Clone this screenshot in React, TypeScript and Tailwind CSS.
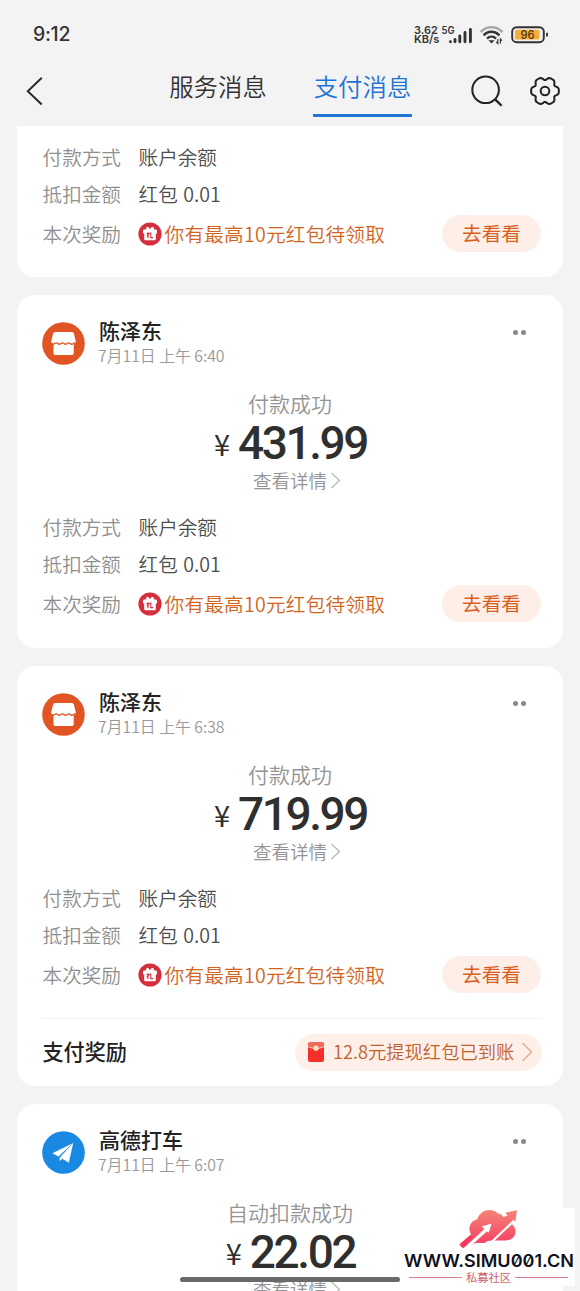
import type { ReactNode } from 'react'

interface Payment {
  name: string
  time: string
  status: string
  amount: string
  icon: 'shop' | 'plane'
  cashback?: string
}

const payments: Payment[] = [
  { name: '陈泽东', time: '7月11日 上午 6:40', status: '付款成功', amount: '431.99', icon: 'shop' },
  {
    name: '陈泽东',
    time: '7月11日 上午 6:38',
    status: '付款成功',
    amount: '719.99',
    icon: 'shop',
    cashback: '12.8元提现红包已到账',
  },
  { name: '高德打车', time: '7月11日 上午 6:07', status: '自动扣款成功', amount: '22.02', icon: 'plane' },
]

// Six-lobed outline for the settings icon
const gearPath = () => {
  const points: string[] = []
  for (let deg = 0; deg < 360; deg += 4) {
    const t = (deg * Math.PI) / 180
    const r = 12.8 + 1.5 * Math.cos(6 * t) - 0.45 * Math.cos(12 * t)
    points.push(`${(16 + r * Math.cos(t)).toFixed(2)} ${(16 + r * Math.sin(t)).toFixed(2)}`)
  }
  return `M${points.join('L')}Z`
}

const StatusBar = () => (
  <div className="flex h-[70px] items-center justify-between pl-[33px] pr-[32px] font-['Inter','Noto_Sans_CJK_SC',sans-serif] text-[#333]">
    <span className="text-[19.5px] font-medium tracking-[-0.3px]">9:12</span>
    <div className="flex items-center">
      <div className="w-[26px] text-[11px] font-semibold leading-[9.5px]">
        <div>3.62</div>
        <div>KB/s</div>
      </div>
      <svg width="33" height="20" viewBox="0 0 33 20" className="text-[#333]">
        <text x="1.5" y="9" fontSize="10" fontWeight="600" fill="currentColor" textLength="13" lengthAdjust="spacingAndGlyphs">
          5G
        </text>
        <g stroke="currentColor" strokeWidth="2.9" strokeLinecap="round">
          <path d="M10.4 16.6v.2M15 14.4v2.4M19.8 11v5.8M25 7.4v9.4M30.4 4.4v12.4" />
        </g>
      </svg>
      <svg width="25" height="20" viewBox="0 0 25 20" fill="none" className="ml-[6px]">
        <path d="M1.6 7C7.5 .6 17.5 .6 23.4 7" stroke="#aaa" strokeWidth="2.6" />
        <path d="M4.6 10.4c4.4-4.8 11.4-4.8 15.8 0" stroke="#333" strokeWidth="2.6" />
        <path d="M8 13.6c2.6-2.6 6.4-2.6 9 0" stroke="#333" strokeWidth="2.4" />
        <path d="M9.4 15.2h6.2L12.5 18.4z" fill="#333" />
        <path d="M18.8 14v4.5l-1.6-1.6M21.4 18.5V14l1.6 1.6" stroke="#333" strokeWidth="1.2" />
      </svg>
      <svg width="37" height="18" viewBox="0 0 37 18" className="ml-[7px]">
        <rect x="1.2" y="1.2" width="31.6" height="15" rx="4.5" fill="none" stroke="#333" strokeWidth="1.9" />
        <rect x="3.9" y="3.8" width="24.6" height="9.8" rx="1.5" fill="#f7ac3e" />
        <path d="M36 6.8v3.8" stroke="#333" strokeWidth="1.8" />
        <text x="9.5" y="13" fontSize="12" fontWeight="500" fill="#4b3513" textLength="14" lengthAdjust="spacingAndGlyphs">
          96
        </text>
      </svg>
    </div>
  </div>
)

const NavBar = () => (
  <div className="flex h-14 items-start pl-[26px]">
    <svg width="18" height="30" viewBox="0 0 18 30" fill="none" className="mt-[6px]">
      <path d="M15.8 1.8L1.8 15.2l14 13.2" stroke="#2a2a2a" strokeWidth="2" />
    </svg>
    <div className="ml-[125px] w-[98px] whitespace-nowrap text-center text-[24.4px] font-[350] leading-[31px] text-[#333]">
      服务消息
    </div>
    <div className="ml-[46px] h-[47px] w-[99px] whitespace-nowrap rounded-b-[1px] border-b-[3px] border-[#1f74d6] text-center text-[24.4px] font-[350] leading-[31px] text-[#1f74d6]">
      支付消息
    </div>
    <svg width="32" height="32" viewBox="0 0 32 32" fill="none" stroke="#222" strokeWidth="2" className="ml-[59px] mt-[5px]">
      <circle cx="14.6" cy="14.8" r="13.3" />
      <path d="M24.4 24.6l6.2 6.2" strokeWidth="2.3" />
    </svg>
    <svg width="32" height="32" viewBox="0 0 32 32" fill="none" stroke="#222" strokeWidth="2" className="ml-[26px] mt-[5px]">
      <path d={gearPath()} strokeLinejoin="round" />
      <circle cx="16" cy="16" r="4.3" />
    </svg>
  </div>
)

const GiftIcon = () => (
  <svg width="24" height="24" viewBox="0 0 24 24" className="shrink-0">
    <circle cx="12" cy="12" r="11.6" fill="#d32f3d" />
    <path d="M12 8.4L8.200 7.600 8.800 5.400 10.600 5.600zM12 8.400l3.800-.8-.6-2.200-1.800.2z" fill="#fff" stroke="#fff" strokeWidth=".8" strokeLinejoin="round" />
    <rect x="5" y="7.600" width="14" height="4" rx="1.200" fill="#fff" />
    <rect x="6.2" y="9" width="11.6" height="9.2" rx="1.2" fill="#fff" />
    <path d="M10 10.200v6M8.600 11.600h2.600l-2.400 2.600M12.800 10.200v5.400h2.400" fill="none" stroke="#d32f3d" strokeWidth="1.1" />
  </svg>
)

const ShopAvatar = () => (
  <svg width="43" height="43" viewBox="0 0 43 43" className="shrink-0">
    <circle cx="21.5" cy="21.5" r="21.3" fill="#e15524" />
    <path
      d="M13.400 10h16.200c1.300 0 2.100.7 2.400 1.900l1.700 7.100c.4 1.700-.4 2.900-2 3.200v8.700c0 1.300-.8 2.100-2.100 2.100H13.600c-1.300 0-2.100-.8-2.100-2.100v-8.700c-1.600-.3-2.600-1.500-2.200-3.200L11 11.900c.3-1.200 1.100-1.900 2.400-1.900z"
      fill="#fff"
    />
    <path
      d="M9.500 21.200q1.600 1.800 3.200.4t3.100 0 3.100 0 3.100 0 3.100 0 3.100 0 3.100 0 2.200-.4"
      fill="none"
      stroke="#e15524"
      strokeWidth="1.300"
    />
  </svg>
)

const PlaneAvatar = () => (
  <svg width="43" height="43" viewBox="0 0 43 43" className="shrink-0">
    <circle cx="21.500" cy="21.500" r="21.300" fill="#1989e3" />
    <path d="M31.200 12L10.400 22.200l6 3.400z" fill="#fff" />
    <path d="M31.200 12L18 26.200l8.800 5.600z" fill="#fff" />
    <path d="M17.200 26.400l.8 3.600 2.600-2.400z" fill="#fff" />
  </svg>
)

const RedPacket = () => (
  <svg width="16" height="20" viewBox="0 0 16 20" className="shrink-0">
    <rect width="16" height="20" rx="2.500" fill="#f5302b" />
    <path d="M0 5V2.500A2.500 2.500 0 0 1 2.500 0h11A2.500 2.500 0 0 1 16 2.500V5L8 7.500z" fill="#ee6a5a" />
    <path d="M0 4.800l8 2.400 8-2.400" fill="none" stroke="#fbc9b4" strokeWidth=".9" />
    <circle cx="8" cy="6.200" r="2.600" fill="#fde0c4" />
  </svg>
)

const InfoRow = ({ label, children }: { label: string; children: ReactNode }) => (
  <div className="flex h-[37px] items-center">
    <span className="w-24 text-[#8f8f8f]">{label}</span>
    <span className="text-[#4d4d4d] [word-spacing:1px]">{children}</span>
  </div>
)

const PaymentDetails = () => (
  <div className="whitespace-nowrap pl-[0.6px] text-[19.6px] font-[350] leading-[28px]">
    <InfoRow label="付款方式">账户余额</InfoRow>
    <InfoRow label="抵扣金额">红包 0.01</InfoRow>
    <div className="flex h-[43px] items-center">
      <span className="w-[95px] text-[#8f8f8f]">本次奖励</span>
      <GiftIcon />
      <span className="ml-[3px] tracking-[0.25px] text-[#d2641e]">你有最高10元红包待领取</span>
      <button className="ml-auto h-[37px] w-[99px] rounded-full bg-[#feeee8] pb-[2px] font-normal text-[#d95f1e]">去看看</button>
    </div>
  </div>
)

const PaymentCard = ({ payment }: { payment: Payment }) => (
  <div className="rounded-[18px] bg-white pl-[25px] pr-[22px] pt-[23px]">
    <div className="flex h-[50px] items-start">
      <div className="pt-1">{payment.icon === 'shop' ? <ShopAvatar /> : <PlaneAvatar />}</div>
      <div className="ml-[13px] whitespace-nowrap">
        <div className="h-[25px] pl-px text-[21px] font-medium leading-[24px] text-[#222]">{payment.name}</div>
        <div className="text-[15.8px] font-[350] leading-[26px] text-[#999]">{payment.time}</div>
      </div>
      <div className="ml-auto mr-[15px] mt-3 flex gap-[3px]">
        <span className="size-[5px] rounded-full bg-[#888]" />
        <span className="size-[5px] rounded-full bg-[#888]" />
      </div>
    </div>

    <div className="mr-[3px] mt-5 flex flex-col items-center whitespace-nowrap font-[350] text-[#949494]">
      <div className="h-[30px] text-[21px] leading-[30px]">{payment.status}</div>
      <div className="flex h-[50px] items-center gap-[7px] text-[#2f2f2f]">
        <span className="w-[18px] text-center text-[29px] font-normal leading-[50px]">¥</span>
        <span className="pt-px font-['Roboto'] text-[46px] font-medium leading-[49px] tracking-[-2.4px]">{payment.amount}</span>
      </div>
      <div className="flex h-6 items-center gap-[3px] pl-[14px] text-[18.500px] leading-[24px]">
        查看详情
        <svg width="11" height="17" viewBox="0 0 11 17" fill="none">
          <path d="M1.500 1l8 7.500-8 7.500" stroke="#bbb" strokeWidth="1.400" />
        </svg>
      </div>
    </div>

    <div className="mt-4 pb-[23px]">
      <PaymentDetails />
    </div>

    {payment.cashback && (
      <div className="-mt-px flex h-[68px] items-center justify-between whitespace-nowrap border-t border-[#f3f3f3] pb-px">
        <span className="pl-[0.5px] text-[21.100px] font-medium text-[#222]">支付奖励</span>
        <div className="-mr-px flex h-[37px] w-[247px] items-center rounded-full bg-[#fef0e9] pl-[13px] text-[18.300px] font-[350] text-[#c2602c]">
          <RedPacket />
          <span className="ml-[9px]">{payment.cashback}</span>
          <svg width="12" height="20" viewBox="0 0 12 20" fill="none" className="ml-[7px]">
            <path d="M1.500 1l9 9-9 9" stroke="#dfb397" strokeWidth="1.700" />
          </svg>
        </div>
      </div>
    )}
  </div>
)

const Watermark = () => (
  <div className="absolute left-[402px] top-[1208px] flex h-[78px] w-[173px] flex-col items-center bg-white">
    <svg width="60" height="41" viewBox="12 24 180 124" className="ml-[1px] shrink-0">
      <defs>
        <linearGradient id="cloud" x1="0" y1="0" x2="0" y2="1">
          <stop offset="0" stopColor="#f58378" />
          <stop offset="1" stopColor="#f5395f" />
        </linearGradient>
      </defs>
      <path
        d="M13 134L48 104C36 84 46 62 67 58C75 30 110 22 128 40C136 41 142 45 146 52L158 46L151 38L187 31L181 66L174 60L172 74C190 88 184 120 154 122H112L98 124L88 130H62L24 146Z"
        fill="url(#cloud)"
      />
      <path d="M30 148L95 88" stroke="#fff" strokeWidth="10" />
      <path d="M110 71L80 80L101 99Z" fill="#fff" />
      <path d="M13 134L20 144L52 112L46 106Z" fill="#f5395f" />
      <path d="M94 142L178 62" stroke="#fff" strokeWidth="7" />
    </svg>
    <svg width="173" height="22" viewBox="0 0 173 22" className="shrink-0">
      <text
        x="2"
        y="18"
        className="font-['Inter'] text-[17px] font-semibold [font-feature-settings:'zero']"
        fill="#10101c"
        textLength="170"
        lengthAdjust="spacingAndGlyphs"
      >
        WWW.SIMU001.CN
      </text>
    </svg>
    <div className="flex w-[160px] items-center justify-between text-[11.300px] leading-[13px] text-[#c9606c]">
      <span className="h-px w-[53px] bg-[#dc8089]" />
      <span>私募社区</span>
      <span className="h-px w-[53px] bg-[#dc8089]" />
    </div>
  </div>
)

export default function App() {
  return (
    <div className="relative h-[1291px] w-[580px] overflow-hidden bg-[#f3f3f3] font-['Noto_Sans_CJK_SC',sans-serif]">
      <StatusBar />
      <NavBar />

      <div className="flex flex-col px-[17px]">
        {/* Tail of the previous message, scrolled under the nav bar */}
        <div className="mb-[18px] rounded-b-[18px] bg-white pb-[22px] pl-[25px] pr-[22px] pt-3">
          <PaymentDetails />
        </div>

        <div className="flex flex-col gap-[18px]">
          {payments.map((payment) => (
            <PaymentCard key={payment.time} payment={payment} />
          ))}
        </div>
      </div>

      <Watermark />

      {/* Home indicator */}
      <div className="absolute left-[180px] top-[1277px] h-[5px] w-[220px] rounded-full bg-[#6a6a6a]" />
    </div>
  )
}
